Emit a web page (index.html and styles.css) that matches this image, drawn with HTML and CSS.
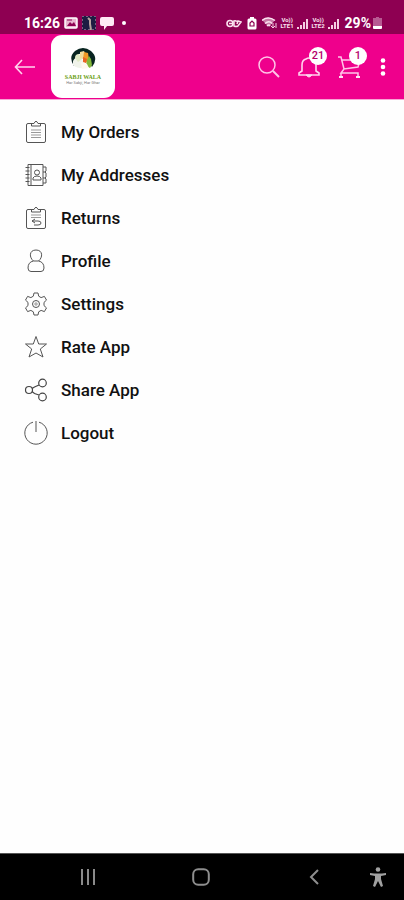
FILE: index.html
```html
<!DOCTYPE html>
<html lang="en">
<head>
  <meta charset="UTF-8" />
  <meta name="viewport" content="width=device-width, initial-scale=1" />
  <title>Sabji Wala - Account</title>
  <link rel="stylesheet" href="styles.css">
</head>
<body>

  <div class="status-bar">
    <div class="status-left">
      <span class="clock">16:26</span>
      <svg width="14" height="12" viewBox="0 0 14 12"><rect x="1" y="1" width="12" height="10" rx="1" fill="#e8b6d0" stroke="#fff" stroke-width="1.5"/><path d="M3 9l3-4 2 2 2-2 2 4z" fill="#8e0052"/><path d="M3 3h5" stroke="#8e0052"/></svg>
      <svg width="14" height="14" viewBox="0 0 14 14"><rect width="14" height="14" fill="#1d1c42"/><path d="M6 2l2 2v4l1 6" stroke="#b9a3a0" stroke-width="2" fill="none"/><rect x=".5" y=".5" width="13" height="13" fill="none" stroke="#d8a9c4" stroke-dasharray="1 3"/></svg>
      <svg width="14" height="13" viewBox="0 0 14 13"><path d="M2 0h10q2 0 2 2v5q0 2-2 2H7l-3 4V9H2Q0 9 0 7V2q0-2 2-2z" fill="#ffeaf5"/></svg>
      <span class="dot"></span>
    </div>
    <div class="status-right">
      <svg width="16" height="9" viewBox="0 0 16 9"><circle cx="4" cy="4.500" r="3" fill="none" stroke="#fbe3f0" stroke-width="1.600"/><path d="M3 4.500h4M7 2.500Q9 1 11 2.500M8 2v5q2 1 4 0l3-4-3-1-1 3" fill="none" stroke="#fbe3f0" stroke-width="1.500"/></svg>
      <svg class="saver" width="10" height="13" viewBox="0 0 10 13"><path d="M3 0h4v1.500h1q1.500 0 1.500 1.500v8q0 1.500-1.500 1.500H2Q.5 12.500.5 11V3q0-1.500 1.500-1.500h1z" fill="#fff"/><path d="M3 9V6l2-2 2 2v3z" fill="none" stroke="#8e0052" stroke-width="1.200"/></svg>
      <svg width="16" height="12" viewBox="0 0 16 12"><path d="M0 3q6-5 13 0L7 10z" fill="#c87aa6"/><path d="M0 3.500q6-5 13 0M3 6.500q4-3.500 7 0M5 9q2-2 3 0" fill="none" stroke="#fbe3f0" stroke-width="1.500"/><path d="M11 6v5m-2-2l2 2 2-2M14 11V6" fill="none" stroke="#f4cfe2"/></svg>
      <span class="lte">Vo))<br>LTE1</span>
      <svg width="12" height="11" viewBox="0 0 12 11"><path d="M1 11V9M4 11V7M7 11V4M10 11V1" stroke="#f4cfe2" stroke-width="2"/></svg>
      <span class="lte">Vo))<br>LTE2</span>
      <svg width="12" height="11" viewBox="0 0 12 11"><path d="M1 11V9M4 11V7M7 11V4M10 11V1" stroke="#f4cfe2" stroke-width="2"/></svg>
      <span class="percent">29%</span>
      <svg width="9" height="13" viewBox="0 0 9 13"><path d="M3 0h3v1h3v8H0V1h3z" fill="#b75a92"/><path d="M0 9h9v2q0 1-1 1H1q-1 0-1-1z" fill="#fff"/></svg>
    </div>
  </div>

  <header class="app-bar">
    <button class="icon-btn back" aria-label="Back">
      <svg width="22" height="16" viewBox="0 0 22 16"><path d="M8 1L1.500 8 8 15M2 8h19" fill="none" stroke="#ffd3ee" stroke-width="1.600"/></svg>
    </button>
    <a class="logo" href="#" aria-label="Sabji Wala home">
      <svg width="28" height="24" viewBox="0 0 28 24">
        <path d="M5 19Q-1 10 6 4 14-2 22 4q8 7 1 16l-4-6-2-8-7 1z" fill="#082420"/>
        <path d="M4 14q3-5 7-4l4 5 1 6q-7 1-12-3z" fill="#f0f3ea"/>
        <path d="M6 11q0-4 4-4l3 5-4 3z" fill="#dfe9c4"/>
        <path d="M11 5l4-1 2 4-1 5-5-2z" fill="#f4dc9a"/>
        <path d="M15 5l4 1 1 6-3 4-3-4z" fill="#f19a25"/>
        <path d="M14 10l4 2-1 4-3-1z" fill="#ea6426"/>
        <path d="M20 9l2 3 1 6-2 3-4-2 1-6z" fill="#83b83a"/>
        <path d="M12 15l6 2 2 4-7 1z" fill="#fff8ee"/>
      </svg>
      <span class="logo-name">SABJI WALA</span>
      <span class="logo-tag">Har Sabji, Har Ghar</span>
    </a>
    <div class="actions">
      <button class="icon-btn" aria-label="Search">
        <svg width="22" height="22" viewBox="0 0 22 22"><circle cx="9" cy="9" r="8" fill="none" stroke="#ffc4e8" stroke-width="1.500"/><path d="M15 15l6 6" stroke="#ffc4e8" stroke-width="2"/></svg>
      </button>
      <button class="icon-btn" aria-label="Notifications">
        <svg width="22" height="22" viewBox="0 0 22 22"><path d="M1 19h20v-2l-3-2V9q0-5-4-6-3-2-6 0-4 1-4 6v6l-3 2z" fill="none" stroke="#ffd3ee" stroke-width="1.600"/><path d="M8 19q3 4 6 0z" fill="#ffd3ee" stroke="#ffd3ee"/></svg>
        <span class="badge">21</span>
      </button>
      <button class="icon-btn" aria-label="Cart">
        <svg width="22" height="22" viewBox="0 0 22 22"><path d="M0 1h3l3 12 14-2 2-7M4 4h16M6 13l-3 4h17v3M3 17v3" fill="none" stroke="#ffc4e8" stroke-width="1.500"/><path d="M1 21h4M18 21h4" stroke="#ffe3f4" stroke-width="2"/></svg>
        <span class="badge">1</span>
      </button>
      <button class="icon-btn more" aria-label="More options">
        <svg width="6" height="18" viewBox="0 0 6 18"><g fill="#fff"><circle cx="3" cy="2.500" r="2.300"/><circle cx="3" cy="9" r="2.300"/><circle cx="3" cy="15.500" r="2.300"/></g></svg>
      </button>
    </div>
  </header>

  <main>
    <nav class="menu" aria-label="Account">
      <a href="#">
        <svg viewBox="0 0 24 24"><path d="M8 3.500H4Q2.500 3.500 2.500 5v16q0 1.500 1.500 1.500h16q1.500 0 1.500-1.500V5q0-1.500-1.500-1.500h-4"/><path d="M7.500 6V3.500h2.500q2-4.500 4 0h2.500V6z"/><path class="light" d="M7 10h10M7 12.500h10M7 15h10M7 17.500h10"/></svg>
        My Orders
      </a>
      <a href="#">
        <svg viewBox="0 0 24 24"><path d="M4 1.500h15v21H4zM7 2v20"/><path d="M1.500 4.500h4M1.500 8h4M1.500 11.500h4M1.500 15h4M1.500 18.500h4"/><path d="M19 4h3v4l-1 1 1 1v4l-1 1 1 1v4h-3M19 9h2M19 15h2"/><circle cx="13" cy="9.500" r="2.500"/><path d="M9 17v-2q1-2 4-2t4 2v2z"/></svg>
        My Addresses
      </a>
      <a href="#">
        <svg viewBox="0 0 24 24"><path d="M8 3.500H4Q2.500 3.500 2.500 5v16q0 1.500 1.500 1.500h16q1.500 0 1.500-1.500V5q0-1.500-1.500-1.500h-4"/><path d="M7.500 6V3.500h2.500q2-4.500 4 0h2.500V6z"/><path class="light" d="M7 9h10M7 11.500h10"/><path d="M11 13l-3 2 3 2M8 15h6q3 0 3 2t-3 2h-4"/></svg>
        Returns
      </a>
      <a href="#">
        <svg viewBox="0 0 24 24"><path d="M12 1c7 0 7 7.500 2.500 11h-5C5 8.500 5 1 12 1z"/><path d="M9.500 12Q4 13 4 19q0 3.500 3 3.500h10q3 0 3-3.500 0-6-5.500-7"/></svg>
        Profile
      </a>
      <a href="#">
        <svg viewBox="0 0 24 24"><path d="M10 1h4l.7 3.200 2.400 1.400 3.300-1.200 2.100 3.700-2.500 2.300v3.200l2.500 2.300-2.100 3.700-3.300-1.200-2.400 1.400L14 23h-4l-.7-3.200-2.400-1.400-3.300 1.200-2.100-3.700L4 13.600v-3.200L1.500 8.100l2.100-3.700 3.300 1.200 2.400-1.400z"/><circle cx="12" cy="12" r="3.500"/><path class="light" d="M12 10v4M10 12h4"/></svg>
        Settings
      </a>
      <a href="#">
        <svg viewBox="0 0 24 24"><path d="M12 1.500l2.700 7.500H22.500l-6.200 5 2.700 8-7-4-7 4 2.700-8L1.500 9h7.800z"/></svg>
        Rate App
      </a>
      <a href="#">
        <svg class="bold" viewBox="0 0 24 24"><circle cx="5" cy="12" r="3.500"/><circle cx="18.500" cy="5" r="3.800"/><circle cx="18.500" cy="19" r="3.800"/><path d="M8 10.500l2.500-1.500 4.500-2M8 13.500l2.500 2 4.500 1.500"/></svg>
        Share App
      </a>
      <a href="#">
        <svg viewBox="0 0 24 24"><path d="M9 1.200a11.200 11.200 0 1 0 6 0M12 0v11"/></svg>
        Logout
      </a>
    </nav>
  </main>

  <footer class="nav-bar">
    <button aria-label="Recent apps">
      <svg width="16" height="16" viewBox="0 0 16 16"><path d="M2 0v16M8 0v16M14 0v16" stroke="#8a8a8a" stroke-width="2"/></svg>
    </button>
    <button aria-label="Home">
      <svg width="18" height="18" viewBox="0 0 18 18"><rect x="1.200" y="1.200" width="15.600" height="15.600" rx="5" fill="none" stroke="#8e8e8e" stroke-width="2"/></svg>
    </button>
    <button aria-label="Back">
      <svg width="10" height="16" viewBox="0 0 10 16"><path d="M9 1L2 8l7 7" fill="none" stroke="#8e8e8e" stroke-width="2"/></svg>
    </button>
    <button aria-label="Accessibility">
      <svg width="16" height="20" viewBox="0 0 16 20"><circle cx="8" cy="2.500" r="2.300" fill="#a0a0a0"/><path d="M0 6q8 1 16 0v2l-5 1v3l2 7-2 1-3-6-3 6-2-1 2-7V9L0 8z" fill="#a0a0a0"/></svg>
    </button>
  </footer>

</body>
</html>
```
FILE: styles.css
```css
* {
  box-sizing: border-box;
}
body {
  margin: 0;
  min-height: 100vh;
  display: flex;
  flex-direction: column;
  font-family: Roboto, Arial, sans-serif;
  background-color: #fefefe;
  color: #111;
}
button {
  padding: 0;
  border: none;
  background: none;
  color: inherit;
  font-family: inherit;
  cursor: pointer;
}
svg {
  display: block;
  flex-shrink: 0;
}

/* Status bar */
.status-bar {
  display: flex;
  justify-content: space-between;
  height: 34px;
  padding: 12px 22px 0 24px;
  background-color: #8e0052;
  color: #fff;
}
.status-left,
.status-right {
  display: flex;
  align-items: center;
}
.status-left {
  gap: 4px;
}
.status-right {
  gap: 2px;
}
.clock,
.percent {
  font-size: 14px;
  font-weight: 700;
}
.percent {
  margin-left: 3px;
}
.saver {
  margin: 0 3px;
}
.dot {
  width: 4px;
  height: 4px;
  margin-left: 4px;
  border-radius: 50%;
  background-color: #fff;
}
.lte {
  width: 15px;
  font-size: 6px;
  line-height: 6px;
  font-weight: 700;
  text-align: center;
  color: #fbe3f0;
}

/* App bar */
.app-bar {
  display: flex;
  align-items: center;
  height: 66px;
  padding: 0 18px 0 14px;
  background-color: #ef008c;
  border-bottom: 1px solid #f9a5d5;
}
.icon-btn {
  position: relative;
}
.logo {
  display: flex;
  flex-direction: column;
  align-items: center;
  width: 64px;
  height: 63px;
  margin-left: 15px;
  padding-top: 12px;
  border-radius: 11px;
  background-color: #fff;
  text-decoration: none;
  white-space: nowrap;
}
.logo-name {
  margin-top: 3px;
  font-family: "Liberation Serif", serif;
  font-size: 6px;
  line-height: 7px;
  font-weight: 700;
  color: #6a9e12;
}
.logo-tag {
  font-size: 4px;
  line-height: 4px;
  color: #777;
}
.actions {
  display: flex;
  align-items: center;
  gap: 18px;
  margin-left: auto;
}
.more {
  margin-left: 2px;
}
.badge {
  position: absolute;
  top: -9px;
  right: -7px;
  width: 18px;
  height: 18px;
  border-radius: 50%;
  background-color: #fff;
  color: #b5006b;
  font-size: 11px;
  line-height: 18px;
  font-weight: 500;
  text-align: center;
}

/* Menu */
main {
  flex: 1;
}
.menu {
  display: flex;
  flex-direction: column;
  padding-top: 10px;
}
.menu a {
  display: flex;
  align-items: center;
  gap: 13px;
  height: 43px;
  padding: 0 24px;
  color: #111;
  font-size: 17px;
  font-weight: 500;
  text-decoration: none;
}
.menu svg {
  width: 24px;
  height: 24px;
  fill: none;
  stroke: #555;
  stroke-width: 1;
}
.menu .light {
  stroke: #999;
}
.menu .bold {
  stroke: #444;
  stroke-width: 1.2;
}

/* Android navigation */
.nav-bar {
  display: grid;
  grid-template-columns: 1fr 1fr 1fr 16px;
  height: 47px;
  padding: 0 18px 0 32px;
  border-top: 1px solid #555;
  background-color: #000;
}
.nav-bar button {
  display: flex;
  align-items: center;
  justify-content: center;
}
```
